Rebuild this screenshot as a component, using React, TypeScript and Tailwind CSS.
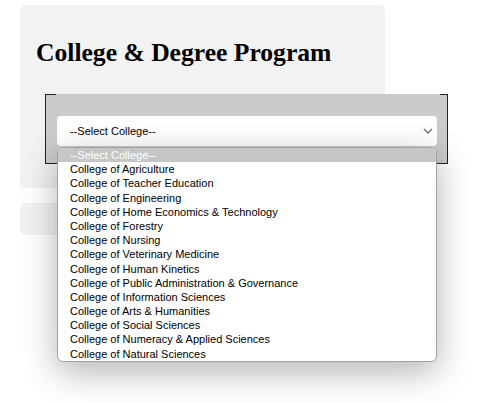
import React from 'react';

const colleges = [
  'College of Agriculture',
  'College of Teacher Education',
  'College of Engineering',
  'College of Home Economics & Technology',
  'College of Forestry',
  'College of Nursing',
  'College of Veterinary Medicine',
  'College of Human Kinetics',
  'College of Public Administration & Governance',
  'College of Information Sciences',
  'College of Arts & Humanities',
  'College of Social Sciences',
  'College of Numeracy & Applied Sciences',
  'College of Natural Sciences',
];

const Chevron: React.FC = () => (
  <svg width="10" height="6" viewBox="0 0 10 6" className="absolute right-[4px] top-[12px]">
    <path d="M1 1 L5 5 L9 1" fill="none" stroke="#6b6b6b" strokeWidth="1.3" />
  </svg>
);

export default function App() {
  return (
    <div className="min-h-screen bg-white pt-[5px] pl-[20px] font-['Liberation_Sans',Arial,sans-serif]">
      <div className="w-[365px] h-[183px] rounded-[5px] bg-[#f2f2f2] pt-[33px] pl-[16px]">
        <h2 className="font-['Liberation_Serif','Times_New_Roman',serif] text-[25.6px] leading-[30px] font-bold text-black">
          College &amp; Degree Program
        </h2>

        <div className="relative mt-[26px] ml-[9px] w-[403px] h-[70px] bg-[#cbcbcb] border-l border-r border-b border-[#222] pt-[22px] pl-[11px] pr-[10px]">
          <span className="absolute -left-px top-0 w-[11px] h-px bg-[#222]" />
          <span className="absolute -right-px top-0 w-[8px] h-px bg-[#222]" />

          <div className="relative h-[30px] bg-white rounded-[4px] pl-[13px] flex items-center text-[11px] text-black">
            <span className="whitespace-nowrap">--Select College--</span>
            <Chevron />

            <div className="absolute left-0 right-0 top-[31px] z-10 bg-white rounded-[6px] border border-[#a3a3a3] overflow-hidden shadow-[0_10px_34px_rgba(0,0,0,0.3)]">
              <div className="h-[14.2px] leading-[14.2px] bg-[#c6c6c6] text-white pl-[12px] text-[11px]">
                --Select College--
              </div>
              {colleges.map((c) => (
                <div key={c} className="h-[14.2px] leading-[14.2px] pl-[12px] text-[11px] text-black whitespace-nowrap">
                  {c}
                </div>
              ))}
            </div>
          </div>
        </div>
      </div>

      <div className="mt-[15px] w-[365px] h-[32px] rounded-[5px] bg-[#f2f2f2]" />
    </div>
  );
}
